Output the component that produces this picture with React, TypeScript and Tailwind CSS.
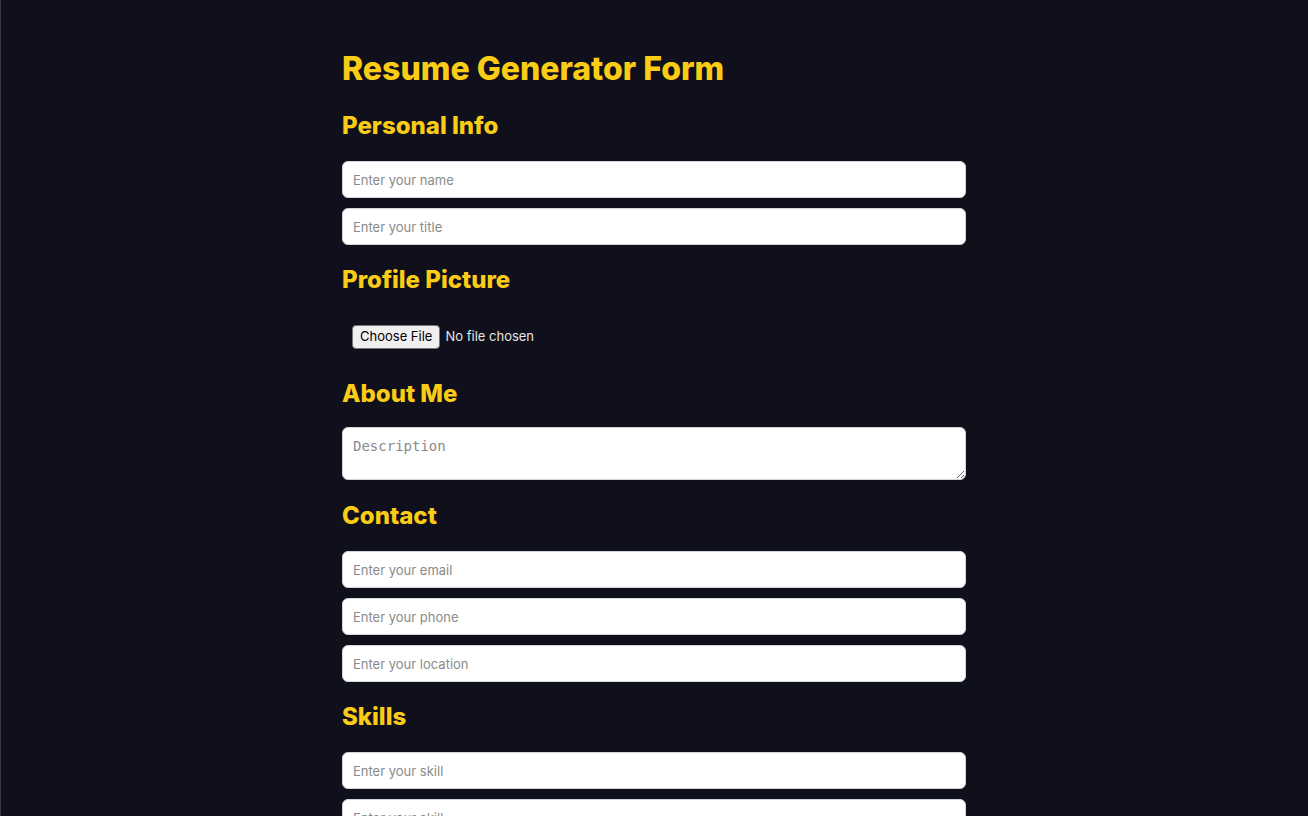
import React from 'react';

const Section = ({ title, tight, children }: { title: string; tight?: boolean; children: React.ReactNode }) => (
  <section className="flex flex-col">
    <h2
      className={
        tight
          ? 'mt-[9px] mb-[17px] text-2xl leading-8 font-extrabold text-[#facc15]'
          : 'mt-[9px] mb-[19px] text-2xl leading-8 font-extrabold text-[#facc15]'
      }
    >
      {title}
    </h2>
    {children}
  </section>
);

const Field = ({ placeholder }: { placeholder: string }) => (
  <input
    type="text"
    placeholder={placeholder}
    className="block w-full h-[37px] mb-[10px] px-[10px] rounded-md border border-gray-300 bg-white text-[13px] text-black placeholder:text-[#8a8a8a] outline-none"
  />
);

const App = () => {
  return (
    <div className="min-h-[816px] bg-[#10101d] shadow-[inset_1px_0_0_#34343f] font-['Inter',sans-serif]">
      <form className="flex flex-col max-w-2xl mx-auto px-6 pt-[51px] pb-10">
        <h1 className="mb-[14px] text-[32px] leading-9 font-extrabold text-[#facc15]">Resume Generator Form</h1>

        <Section title="Personal Info">
          <Field placeholder="Enter your name" />
          <Field placeholder="Enter your title" />
        </Section>

        <Section title="Profile Picture">
          <input
            type="file"
            className="block h-[44px] mb-[10px] p-[10px] text-[13px] text-[#e5e5e5] file:mr-[5px] file:px-[7px] file:py-[1px] file:bg-[#efefef] file:text-black file:border file:border-[#767676] file:rounded-sm"
          />
        </Section>

        <Section title="About Me" tight>
          <textarea
            placeholder="Description"
            className="block w-full h-[53px] mb-[11px] px-[10px] py-[8px] rounded-md border border-gray-300 bg-white font-['DejaVu_Sans_Mono',monospace] text-[14px] text-black placeholder:text-[#8a8a8a] outline-none"
          />
        </Section>

        <Section title="Contact">
          <Field placeholder="Enter your email" />
          <Field placeholder="Enter your phone" />
          <Field placeholder="Enter your location" />
        </Section>

        <Section title="Skills">
          <Field placeholder="Enter your skill" />
          <Field placeholder="Enter your skill" />
          <Field placeholder="Enter your skill" />
        </Section>
      </form>
    </div>
  );
};

export default App;
